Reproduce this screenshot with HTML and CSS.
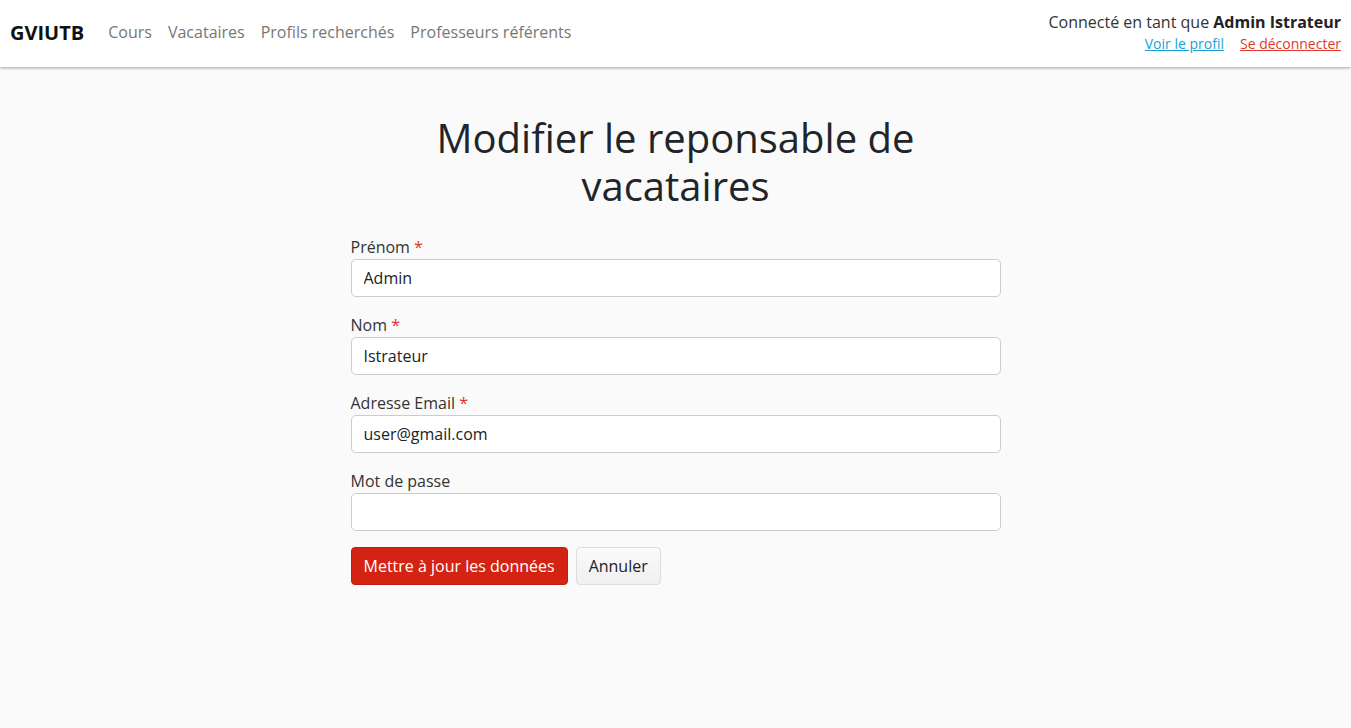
FILE: index.html
```html
<!DOCTYPE html>
<html lang="fr">
<head>
<meta charset="utf-8">
<title>Modifier le reponsable de vacataires</title>
<link rel="stylesheet" href="styles.css">
</head>
<body>
<nav class="navbar">
  <div class="nav-left">
    <a class="brand" href="#">GVIUTB</a>
    <a class="nav-link" href="#">Cours</a>
    <a class="nav-link" href="#">Vacataires</a>
    <a class="nav-link" href="#">Profils recherchés</a>
    <a class="nav-link" href="#">Professeurs référents</a>
  </div>
  <div class="nav-right">
    <div class="user">Connecté en tant que <strong>Admin Istrateur</strong></div>
    <div class="user-links">
      <a class="profile" href="#">Voir le profil</a>
      <a class="logout" href="#">Se déconnecter</a>
    </div>
  </div>
</nav>
<main class="main">
  <h1 class="title">Modifier le reponsable de vacataires</h1>
  <form class="form">
    <div class="group">
      <label class="label">Prénom <span class="req">*</span></label>
      <input class="input" type="text" value="Admin">
    </div>
    <div class="group">
      <label class="label">Nom <span class="req">*</span></label>
      <input class="input" type="text" value="Istrateur">
    </div>
    <div class="group">
      <label class="label">Adresse Email <span class="req">*</span></label>
      <input class="input" type="text" value="user@gmail.com">
    </div>
    <div class="group">
      <label class="label">Mot de passe</label>
      <input class="input" type="password" value="">
    </div>
    <div class="actions">
      <button class="btn btn-primary" type="button">Mettre à jour les données</button>
      <button class="btn btn-default" type="button">Annuler</button>
    </div>
  </form>
</main>
</body>
</html>
```
FILE: styles.css
```css
* { box-sizing: border-box; }
html, body { margin: 0; padding: 0; }
body {
  font-family: "Open Sans", "Liberation Sans", sans-serif;
  font-size: 16px;
  color: #212529;
  background: #fafafa;
  min-height: 728px;
}
a { text-decoration: none; }
.navbar {
  height: 67px;
  background: #fff;
  box-shadow: 0 1px 3px rgba(0,0,0,0.35);
  display: flex;
  justify-content: space-between;
  align-items: flex-start;
  padding: 0 10px;
  position: relative;
}
.nav-left {
  display: flex;
  align-items: center;
  height: 64px;
  gap: 16px;
}
.brand {
  font-weight: 700;
  font-size: 20px;
  color: #111;
  margin-right: 8px;
}
.nav-link {
  color: #777;
  font-size: 16px;
}
.nav-right {
  display: flex;
  flex-direction: column;
  align-items: flex-end;
  padding-top: 11px;
}
.user {
  font-size: 16px;
  line-height: 22px;
  color: #333;
}
.user strong { font-weight: 700; color: #222; }
.user-links {
  display: flex;
  gap: 16px;
  font-size: 14px;
  line-height: 22px;
}
.profile { color: #1a9fd6; text-decoration: underline; }
.logout { color: #e0392b; text-decoration: underline; }
.main {
  display: flex;
  flex-direction: column;
  align-items: center;
  padding-top: 47px;
}
.title {
  font-size: 40px;
  font-weight: 400;
  line-height: 48px;
  text-align: center;
  margin: 0 0 25px;
  width: 500px;
  color: #212529;
}
.form {
  width: 650px;
  display: flex;
  flex-direction: column;
  gap: 16px;
}
.group { display: flex; flex-direction: column; }
.label {
  line-height: 24px;
  font-size: 16px;
  color: #333;
}
.req { color: #d9342b; }
.input {
  height: 38px;
  border: 1px solid #ccc;
  border-radius: 5px;
  background: #fff;
  padding: 0 12px;
  font-family: inherit;
  font-size: 16px;
  color: #222;
}
.actions { display: flex; gap: 8px; }
.btn {
  height: 38px;
  border-radius: 4px;
  font-family: inherit;
  font-size: 16px;
  padding: 0 12px;
}
.btn-primary {
  background: #d42213;
  border: 1px solid #c01e10;
  color: #fff;
}
.btn-default {
  background: linear-gradient(#fafafa, #f0f0f0);
  border: 1px solid #ddd;
  color: #222;
}
```
